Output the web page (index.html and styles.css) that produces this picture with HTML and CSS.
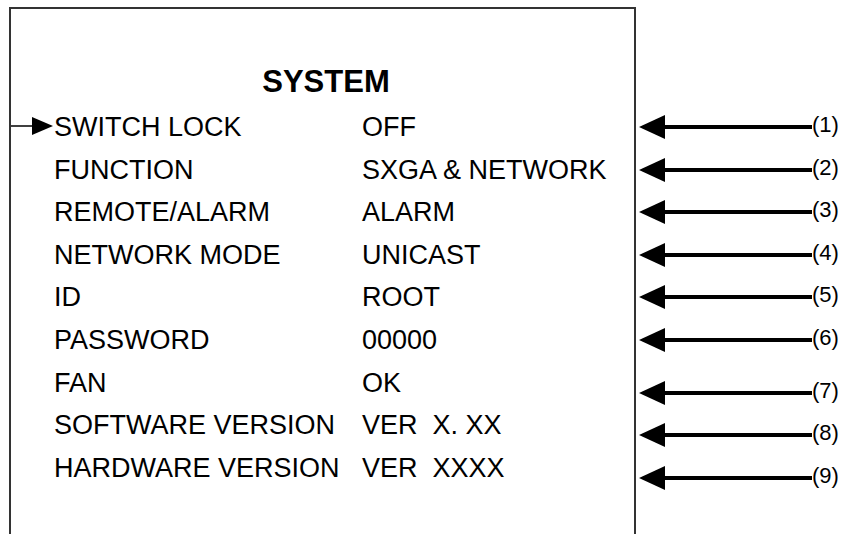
FILE: index.html
```html
<!DOCTYPE html>
<html>
  <head>
    <meta charset="UTF-8">
    <title>SYSTEM menu</title>
    <link rel="stylesheet" href="styles.css">
  </head>
  <body>
    <div class="page">
      <!-- OSD menu panel -->
      <div class="panel">
        <h1 class="title">SYSTEM</h1>
        <div class="menu">
          <div class="item"><svg class="cursor" width="43" height="20" viewBox="0 0 43 20"><line x1="0" y1="10" x2="22" y2="10" stroke="#000" stroke-width="1.5"/><polygon points="21,1 42,10 21,19" fill="#000"/></svg>SWITCH LOCK</div>
          <div class="value">OFF</div>
          <div class="item">FUNCTION</div>
          <div class="value">SXGA &amp; NETWORK</div>
          <div class="item">REMOTE/ALARM</div>
          <div class="value">ALARM</div>
          <div class="item">NETWORK MODE</div>
          <div class="value">UNICAST</div>
          <div class="item">ID</div>
          <div class="value">ROOT</div>
          <div class="item">PASSWORD</div>
          <div class="value">00000</div>
          <div class="item">FAN</div>
          <div class="value">OK</div>
          <div class="item">SOFTWARE VERSION</div>
          <div class="value">VER&nbsp; X. XX</div>
          <div class="item">HARDWARE VERSION</div>
          <div class="value">VER&nbsp; XXXX</div>
        </div>
      </div>
      <!-- numbered callouts -->
      <div class="callouts">
        <div class="callout"><svg class="head" width="26" height="24" viewBox="0 0 26 24"><polygon points="0,12 26,0 26,24" fill="#000"/></svg><span class="shaft"></span><span class="num">(1)</span></div>
        <div class="callout"><svg class="head" width="26" height="24" viewBox="0 0 26 24"><polygon points="0,12 26,0 26,24" fill="#000"/></svg><span class="shaft"></span><span class="num">(2)</span></div>
        <div class="callout"><svg class="head" width="26" height="24" viewBox="0 0 26 24"><polygon points="0,12 26,0 26,24" fill="#000"/></svg><span class="shaft"></span><span class="num">(3)</span></div>
        <div class="callout"><svg class="head" width="26" height="24" viewBox="0 0 26 24"><polygon points="0,12 26,0 26,24" fill="#000"/></svg><span class="shaft"></span><span class="num">(4)</span></div>
        <div class="callout"><svg class="head" width="26" height="24" viewBox="0 0 26 24"><polygon points="0,12 26,0 26,24" fill="#000"/></svg><span class="shaft"></span><span class="num">(5)</span></div>
        <div class="callout"><svg class="head" width="26" height="24" viewBox="0 0 26 24"><polygon points="0,12 26,0 26,24" fill="#000"/></svg><span class="shaft"></span><span class="num">(6)</span></div>
        <div class="callout lower"><svg class="head" width="26" height="24" viewBox="0 0 26 24"><polygon points="0,12 26,0 26,24" fill="#000"/></svg><span class="shaft"></span><span class="num">(7)</span></div>
        <div class="callout"><svg class="head" width="26" height="24" viewBox="0 0 26 24"><polygon points="0,12 26,0 26,24" fill="#000"/></svg><span class="shaft"></span><span class="num">(8)</span></div>
        <div class="callout"><svg class="head" width="26" height="24" viewBox="0 0 26 24"><polygon points="0,12 26,0 26,24" fill="#000"/></svg><span class="shaft"></span><span class="num">(9)</span></div>
      </div>
    </div>
  </body>
</html>
```

FILE: styles.css
```css
html, body {
  overflow: hidden;
}
body {
  margin: 0;
  font-family: "Liberation Sans", Arial, sans-serif;
  color: #000;
  background-color: #fff;
}
.page {
  display: flex;
  height: 534px;
  padding: 7px 0 0 9px;
  box-sizing: border-box;
}
.panel {
  flex: none;
  width: 627px;
  height: 527px;
  border: 2px solid #333;
  border-bottom: none;
  box-sizing: border-box;
}
.title {
  margin: 0;
  padding: 55px 0 0 7px;
  font-size: 31px;
  line-height: 36px;
  font-weight: bold;
  text-align: center;
}
.menu {
  display: grid;
  grid-template-columns: 308px auto;
  margin-top: 6px;
  padding-left: 43px;
  font-size: 27px;
  line-height: 42.6px;
  white-space: nowrap;
}
.cursor {
  margin-left: -43px;
  vertical-align: 0;
}
.callouts {
  padding: 98.7px 0 0 3px;
}
.callout {
  display: flex;
  align-items: center;
  height: 42.6px;
}
.callout.lower {
  margin-top: 10px;
}
.head {
  flex: none;
}
.shaft {
  flex: none;
  width: 147px;
  height: 4px;
  background-color: #000;
}
.num {
  font-size: 22px;
  margin-bottom: 4px;
}
```
